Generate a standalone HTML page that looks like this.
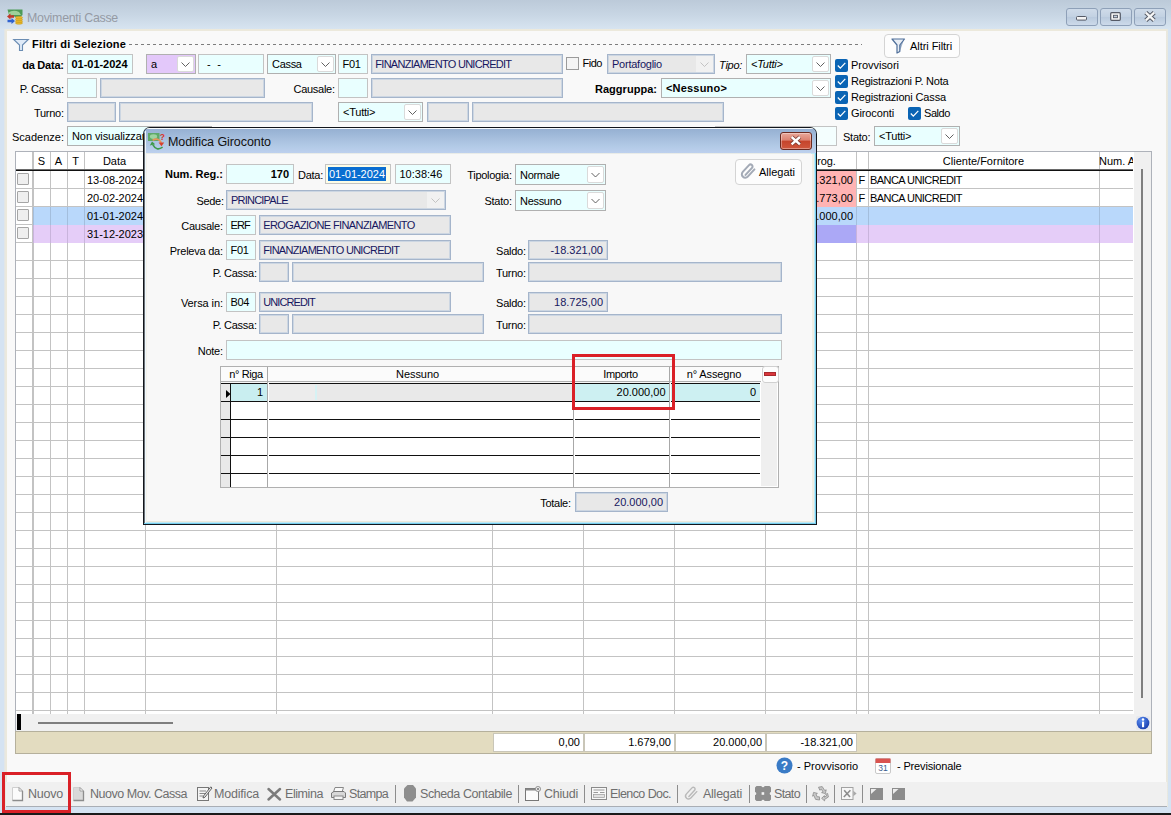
<!DOCTYPE html>
<html lang="it"><head><meta charset="utf-8"><title>Movimenti Casse</title>
<style>
html,body{margin:0;padding:0}
body{width:1171px;height:815px;position:relative;overflow:hidden;background:#c8d8ea;font-family:"Liberation Sans",sans-serif;font-size:11px;color:#000}
.a{position:absolute;box-sizing:content-box}
.t{white-space:nowrap;overflow:visible}
.f{box-sizing:border-box}
.ed{background:#e9ffff;border:1px solid #c3c3c3}
.cb{border-color:#b0b0b0}
.ro{background:#e8e8e8;border:1px solid #a5b5cb;box-shadow:inset 0 0 0 1px #ccd6e2}
.ddb{box-sizing:border-box;background:#fff;border:1px solid #dadada;border-radius:2px}
svg{display:block;overflow:visible}
</style></head><body>
<div class="a " style="left:0px;top:0px;width:1171px;height:815px;background:#d5e3f2"></div>
<div class="a " style="left:0px;top:0px;width:1171px;height:30px;background:linear-gradient(to bottom,#bccad9 0,#c8d6e4 50%,#d8e5f1 100%)"></div>
<div class="a " style="left:0px;top:813px;width:1171px;height:2px;background:#1a1a1a"></div>
<div class="a " style="left:4px;top:29px;width:1164px;height:778px;background:linear-gradient(to right,#dfe5ea 0,#ece9dc 2px,#ece9dc 1162px,#e6e8e2 1164px)"></div>
<div class="a " style="left:7px;top:31px;width:1159px;height:775px;background:#f9f9f9"></div>
<svg class="a" style="left:7px;top:9px" width="16" height="16" viewBox="0 0 16 16">
<path d="M0.5 0.5 H15.5 V6 L12 9 L2 6 Z" fill="#4d9a57"/><path d="M1 4 Q6 0 12 3 L14 6 L3 6Z" fill="#9ed19a"/>
<path d="M0 7.5 L3.5 4.5 V6.3 H7 V8.8 H3.5 V10.5 Z" fill="#c0392b"/>
<path d="M8 12 L4.5 15 V13.2 H0.5 V10.8 H4.5 V9 Z" fill="#2f62d0"/>
<g fill="#e9b92a" stroke="#b98a14" stroke-width="0.4"><ellipse cx="12" cy="14" rx="3.6" ry="1.3"/><ellipse cx="12" cy="12.2" rx="3.6" ry="1.3"/><ellipse cx="12" cy="10.4" rx="3.6" ry="1.3"/><ellipse cx="12" cy="8.6" rx="3.6" ry="1.3"/></g>
</svg>
<div class="a t" style="left:27px;top:9px;width:200px;height:18px;line-height:18px;font-size:12.4px;color:#959aa4;letter-spacing:-0.27px;">Movimenti Casse</div>
<div class="a " style="left:1066px;top:8px;width:30px;height:16px;border:1px solid #8ea0b8;border-radius:3px;background:linear-gradient(to bottom,#cfdbe9,#c2d1e2 50%,#b9cadd 51%,#cddaea)"></div>
<div class="a " style="left:1100px;top:8px;width:30px;height:16px;border:1px solid #8ea0b8;border-radius:3px;background:linear-gradient(to bottom,#cfdbe9,#c2d1e2 50%,#b9cadd 51%,#cddaea)"></div>
<div class="a " style="left:1134px;top:8px;width:30px;height:16px;border:1px solid #8ea0b8;border-radius:3px;background:linear-gradient(to bottom,#cfdbe9,#c2d1e2 50%,#b9cadd 51%,#cddaea)"></div>
<svg class="a" style="left:1066px;top:8px" width="32" height="18" viewBox="0 0 32 18"><rect x="10.5" y="8.5" width="10" height="3.6" rx="1" fill="#f4f4f4" stroke="#555a66" stroke-width="1"/></svg>
<svg class="a" style="left:1100px;top:8px" width="32" height="18" viewBox="0 0 32 18"><rect x="10.7" y="4.7" width="9.6" height="7.6" rx="1" fill="#f4f4f4" stroke="#555a66" stroke-width="1.2"/><rect x="13.5" y="7.3" width="4" height="2.4" fill="#c5d2e2" stroke="#555a66" stroke-width="0.9"/></svg>
<svg class="a" style="left:1134px;top:8px" width="32" height="18" viewBox="0 0 32 18"><path d="M11.8 4.6 L20.2 12.4 M20.2 4.6 L11.8 12.4" stroke="#555a66" stroke-width="4.2" fill="none"/><path d="M11.8 4.6 L20.2 12.4 M20.2 4.6 L11.8 12.4" stroke="#f6f6f6" stroke-width="2.3" fill="none"/></svg>
<svg class="a" style="left:13px;top:38px" width="16" height="14" viewBox="0 0 16 14"><path d="M0.7 1.5 H15.3 L9.5 7 V12.5 H6.5 V7 Z" fill="#dfeaf7" stroke="#6b8db3" stroke-width="1.1" stroke-linejoin="miter"/></svg>
<div class="a t" style="left:32px;top:36px;width:110px;height:16px;line-height:16px;font-size:11px;font-weight:bold;letter-spacing:0.19px;">Filtri di Selezione</div>
<div class="a " style="left:129px;top:44px;width:733px;height:1px;background:repeating-linear-gradient(to right,#7d7d7d 0,#7d7d7d 3px,transparent 3px,transparent 6px)"></div>
<div class="a " style="left:884px;top:34px;width:74px;height:22px;border:1px solid #d4d4d4;border-radius:4px;background:#fdfdfd"></div>
<svg class="a" style="left:891px;top:38px" width="15" height="16" viewBox="0 0 15 16"><path d="M1 1 H13.5 L8.8 7 V13.5 L6 15 V7 Z" fill="#e9eef5" stroke="#4f6f9a" stroke-width="1.2" stroke-linejoin="round"/><path d="M9 7 L13 1.5 L9 13z" fill="#4f6f9a" opacity=".55"/></svg>
<div class="a t" style="left:910px;top:35px;width:50px;height:23px;line-height:23px;font-size:11px;letter-spacing:-0.06px;">Altri Filtri</div>
<div class="a t" style="left:10px;top:55px;width:54px;height:20px;line-height:20px;font-size:11px;font-weight:bold;text-align:right;letter-spacing:-0.22px;margin-left:-0.22px;">da Data:</div>
<div class="a f ed" style="left:67px;top:54px;width:66px;height:20px;"></div>
<div class="a t" style="left:71.5px;top:54px;width:59.5px;height:20px;line-height:20px;font-size:11px;font-weight:bold;color:#000;letter-spacing:-0.03px;">01-01-2024</div>
<div class="a f ed cb" style="left:146px;top:54px;width:50px;height:20px;background:#e3c8fa;"></div>
<div class="a ddb" style="left:177px;top:56px;width:17px;height:16px;"></div>
<svg class="a" style="left:177px;top:56px" width="17" height="16" viewBox="0 0 17 16"><path d="M4.5 6.5 L8.5 10.5 L12.5 6.5" fill="none" stroke="#505050" stroke-width="0.9"/></svg>
<div class="a t" style="left:151px;top:54px;width:28px;height:20px;line-height:20px;font-size:11px;color:#000;letter-spacing:-0.31px;">a</div>
<div class="a f ed" style="left:198px;top:54px;width:66px;height:20px;"></div>
<div class="a t" style="left:207px;top:54px;width:55px;height:20px;line-height:20px;font-size:11px;color:#000;letter-spacing:1.71px;">- -</div>
<div class="a f ed cb" style="left:267px;top:54px;width:69px;height:20px;"></div>
<div class="a ddb" style="left:317px;top:56px;width:17px;height:16px;"></div>
<svg class="a" style="left:317px;top:56px" width="17" height="16" viewBox="0 0 17 16"><path d="M4.5 6.5 L8.5 10.5 L12.5 6.5" fill="none" stroke="#505050" stroke-width="0.9"/></svg>
<div class="a t" style="left:272px;top:54px;width:47px;height:20px;line-height:20px;font-size:11px;color:#000;letter-spacing:-0.31px;">Cassa</div>
<div class="a f ed" style="left:338px;top:54px;width:30px;height:20px;"></div>
<div class="a t" style="left:342.5px;top:54px;width:23.5px;height:20px;line-height:20px;font-size:11px;color:#000;letter-spacing:-0.32px;">F01</div>
<div class="a f ro" style="left:371px;top:54px;width:192px;height:20px;"></div>
<div class="a t" style="left:375.3px;top:54px;width:185.7px;height:20px;line-height:20px;font-size:11px;color:#17175f;letter-spacing:-0.72px;">FINANZIAMENTO UNICREDIT</div>
<div class="a " style="left:566px;top:57px;width:11px;height:11px;border:1px solid #9b9b9b;background:#f4f4f4"></div>
<div class="a t" style="left:582.5px;top:53px;width:30px;height:20px;line-height:20px;font-size:11px;letter-spacing:-0.47px;">Fido</div>
<div class="a f ro" style="left:607px;top:54px;width:108px;height:20px;"></div>
<div class="a " style="left:696px;top:56px;width:17px;height:16px;background:#f1f1f1"></div>
<svg class="a" style="left:696px;top:56px" width="17" height="16" viewBox="0 0 17 16"><path d="M4.5 6.5 L8.5 10.5 L12.5 6.5" fill="none" stroke="#bdbdbd" stroke-width="0.9"/></svg>
<div class="a t" style="left:612px;top:54px;width:86px;height:20px;line-height:20px;font-size:11px;color:#17175f;letter-spacing:-0.24px;">Portafoglio</div>
<div class="a t" style="left:719px;top:55px;width:30px;height:20px;line-height:20px;font-size:11px;font-style:italic;letter-spacing:-0.24px;">Tipo:</div>
<div class="a f ed cb" style="left:746px;top:54px;width:85px;height:20px;"></div>
<div class="a ddb" style="left:812px;top:56px;width:17px;height:16px;"></div>
<svg class="a" style="left:812px;top:56px" width="17" height="16" viewBox="0 0 17 16"><path d="M4.5 6.5 L8.5 10.5 L12.5 6.5" fill="none" stroke="#505050" stroke-width="0.9"/></svg>
<div class="a t" style="left:751px;top:54px;width:63px;height:20px;line-height:20px;font-size:11px;font-style:italic;color:#000;letter-spacing:-0.24px;">&lt;Tutti&gt;</div>
<div class="a t" style="left:10px;top:79px;width:54px;height:20px;line-height:20px;font-size:11px;text-align:right;letter-spacing:-0.26px;margin-left:-0.26px;">P. Cassa:</div>
<div class="a f ed" style="left:67px;top:78px;width:30px;height:20px;"></div>
<div class="a f ro" style="left:100px;top:78px;width:165px;height:20px;"></div>
<div class="a t" style="left:280px;top:79px;width:55px;height:20px;line-height:20px;font-size:11px;text-align:right;letter-spacing:-0.27px;margin-left:-0.27px;">Causale:</div>
<div class="a f ed" style="left:338px;top:78px;width:30px;height:20px;"></div>
<div class="a f ro" style="left:371px;top:78px;width:192px;height:20px;"></div>
<div class="a t" style="left:590px;top:79px;width:67px;height:20px;line-height:20px;font-size:11px;font-weight:bold;text-align:right;letter-spacing:0.03px;margin-left:0.03px;">Raggruppa:</div>
<div class="a f ed cb" style="left:661px;top:78px;width:170px;height:20px;"></div>
<div class="a ddb" style="left:812px;top:80px;width:17px;height:16px;"></div>
<svg class="a" style="left:812px;top:80px" width="17" height="16" viewBox="0 0 17 16"><path d="M4.5 6.5 L8.5 10.5 L12.5 6.5" fill="none" stroke="#505050" stroke-width="0.9"/></svg>
<div class="a t" style="left:666px;top:78px;width:148px;height:20px;line-height:20px;font-size:11px;font-weight:bold;color:#000;letter-spacing:0.19px;">&lt;Nessuno&gt;</div>
<div class="a t" style="left:10px;top:103px;width:54px;height:20px;line-height:20px;font-size:11px;text-align:right;letter-spacing:-0.26px;margin-left:-0.26px;">Turno:</div>
<div class="a f ro" style="left:67px;top:102px;width:49px;height:20px;"></div>
<div class="a f ro" style="left:119px;top:102px;width:194px;height:20px;"></div>
<div class="a f ed cb" style="left:338px;top:102px;width:85px;height:20px;"></div>
<div class="a ddb" style="left:404px;top:104px;width:17px;height:16px;"></div>
<svg class="a" style="left:404px;top:104px" width="17" height="16" viewBox="0 0 17 16"><path d="M4.5 6.5 L8.5 10.5 L12.5 6.5" fill="none" stroke="#505050" stroke-width="0.9"/></svg>
<div class="a t" style="left:343px;top:102px;width:63px;height:20px;line-height:20px;font-size:11px;color:#000;letter-spacing:-0.24px;">&lt;Tutti&gt;</div>
<div class="a f ro" style="left:427px;top:102px;width:42px;height:20px;"></div>
<div class="a f ro" style="left:472px;top:102px;width:252px;height:20px;"></div>
<div class="a t" style="left:5px;top:127px;width:59px;height:20px;line-height:20px;font-size:11px;text-align:right;">Scadenze:</div>
<div class="a f ed cb" style="left:67px;top:126px;width:145px;height:20px;"></div>
<div class="a ddb" style="left:193px;top:128px;width:17px;height:16px;"></div>
<svg class="a" style="left:193px;top:128px" width="17" height="16" viewBox="0 0 17 16"><path d="M4.5 6.5 L8.5 10.5 L12.5 6.5" fill="none" stroke="#505050" stroke-width="0.9"/></svg>
<div class="a t" style="left:72px;top:126px;width:123px;height:20px;line-height:20px;font-size:11px;color:#000;letter-spacing:-0.08px;">Non visualizzare</div>
<div class="a f ed" style="left:715px;top:126px;width:122px;height:20px;"></div>
<div class="a " style="left:716px;top:127px;width:120px;height:18px;background:#f4fefe"></div>
<div class="a t" style="left:843px;top:127px;width:30px;height:20px;line-height:20px;font-size:11px;letter-spacing:-0.24px;">Stato:</div>
<div class="a f ed cb" style="left:874px;top:126px;width:86px;height:20px;"></div>
<div class="a ddb" style="left:941px;top:128px;width:17px;height:16px;"></div>
<svg class="a" style="left:941px;top:128px" width="17" height="16" viewBox="0 0 17 16"><path d="M4.5 6.5 L8.5 10.5 L12.5 6.5" fill="none" stroke="#505050" stroke-width="0.9"/></svg>
<div class="a t" style="left:879px;top:126px;width:64px;height:20px;line-height:20px;font-size:11px;color:#000;letter-spacing:-0.24px;">&lt;Tutti&gt;</div>
<svg class="a" style="left:835px;top:59px" width="13" height="13" viewBox="0 0 13 13"><rect x="0" y="0" width="13" height="13" rx="2" fill="#0a64b4"/><path d="M2.8 6.5 L5.3 9.1 L10.3 3.9" fill="none" stroke="#fff" stroke-width="1.25"/></svg>
<div class="a t" style="left:851px;top:57px;width:140px;height:16px;line-height:16px;font-size:11px;letter-spacing:-0.03px;">Provvisori</div>
<svg class="a" style="left:835px;top:75px" width="13" height="13" viewBox="0 0 13 13"><rect x="0" y="0" width="13" height="13" rx="2" fill="#0a64b4"/><path d="M2.8 6.5 L5.3 9.1 L10.3 3.9" fill="none" stroke="#fff" stroke-width="1.25"/></svg>
<div class="a t" style="left:851px;top:73px;width:140px;height:16px;line-height:16px;font-size:11px;letter-spacing:-0.21px;">Registrazioni P. Nota</div>
<svg class="a" style="left:835px;top:91px" width="13" height="13" viewBox="0 0 13 13"><rect x="0" y="0" width="13" height="13" rx="2" fill="#0a64b4"/><path d="M2.8 6.5 L5.3 9.1 L10.3 3.9" fill="none" stroke="#fff" stroke-width="1.25"/></svg>
<div class="a t" style="left:851px;top:89px;width:140px;height:16px;line-height:16px;font-size:11px;letter-spacing:-0.15px;">Registrazioni Cassa</div>
<svg class="a" style="left:835px;top:107px" width="13" height="13" viewBox="0 0 13 13"><rect x="0" y="0" width="13" height="13" rx="2" fill="#0a64b4"/><path d="M2.8 6.5 L5.3 9.1 L10.3 3.9" fill="none" stroke="#fff" stroke-width="1.25"/></svg>
<div class="a t" style="left:851px;top:105px;width:140px;height:16px;line-height:16px;font-size:11px;letter-spacing:-0.11px;">Giroconti</div>
<svg class="a" style="left:908px;top:107px" width="13" height="13" viewBox="0 0 13 13"><rect x="0" y="0" width="13" height="13" rx="2" fill="#0a64b4"/><path d="M2.8 6.5 L5.3 9.1 L10.3 3.9" fill="none" stroke="#fff" stroke-width="1.25"/></svg>
<div class="a t" style="left:924px;top:105px;width:50px;height:16px;line-height:16px;font-size:11px;letter-spacing:-0.43px;">Saldo</div>
<div class="a " style="left:15px;top:151px;width:1137px;height:581px;background:#fff;border:1px solid #aeb2ba;box-sizing:border-box"></div>
<div class="a " style="left:16px;top:188px;width:1117px;height:1px;background:#c3c3c3"></div>
<div class="a " style="left:16px;top:206px;width:1117px;height:1px;background:#c3c3c3"></div>
<div class="a " style="left:16px;top:224px;width:1117px;height:1px;background:#c3c3c3"></div>
<div class="a " style="left:16px;top:242px;width:1117px;height:1px;background:#c3c3c3"></div>
<div class="a " style="left:16px;top:260px;width:1117px;height:1px;background:#c3c3c3"></div>
<div class="a " style="left:16px;top:278px;width:1117px;height:1px;background:#c3c3c3"></div>
<div class="a " style="left:16px;top:296px;width:1117px;height:1px;background:#c3c3c3"></div>
<div class="a " style="left:16px;top:314px;width:1117px;height:1px;background:#c3c3c3"></div>
<div class="a " style="left:16px;top:332px;width:1117px;height:1px;background:#c3c3c3"></div>
<div class="a " style="left:16px;top:350px;width:1117px;height:1px;background:#c3c3c3"></div>
<div class="a " style="left:16px;top:368px;width:1117px;height:1px;background:#c3c3c3"></div>
<div class="a " style="left:16px;top:386px;width:1117px;height:1px;background:#c3c3c3"></div>
<div class="a " style="left:16px;top:404px;width:1117px;height:1px;background:#c3c3c3"></div>
<div class="a " style="left:16px;top:422px;width:1117px;height:1px;background:#c3c3c3"></div>
<div class="a " style="left:16px;top:440px;width:1117px;height:1px;background:#c3c3c3"></div>
<div class="a " style="left:16px;top:458px;width:1117px;height:1px;background:#c3c3c3"></div>
<div class="a " style="left:16px;top:476px;width:1117px;height:1px;background:#c3c3c3"></div>
<div class="a " style="left:16px;top:494px;width:1117px;height:1px;background:#c3c3c3"></div>
<div class="a " style="left:16px;top:512px;width:1117px;height:1px;background:#c3c3c3"></div>
<div class="a " style="left:16px;top:530px;width:1117px;height:1px;background:#c3c3c3"></div>
<div class="a " style="left:16px;top:548px;width:1117px;height:1px;background:#c3c3c3"></div>
<div class="a " style="left:16px;top:566px;width:1117px;height:1px;background:#c3c3c3"></div>
<div class="a " style="left:16px;top:584px;width:1117px;height:1px;background:#c3c3c3"></div>
<div class="a " style="left:16px;top:602px;width:1117px;height:1px;background:#c3c3c3"></div>
<div class="a " style="left:16px;top:620px;width:1117px;height:1px;background:#c3c3c3"></div>
<div class="a " style="left:16px;top:638px;width:1117px;height:1px;background:#c3c3c3"></div>
<div class="a " style="left:16px;top:656px;width:1117px;height:1px;background:#c3c3c3"></div>
<div class="a " style="left:16px;top:674px;width:1117px;height:1px;background:#c3c3c3"></div>
<div class="a " style="left:16px;top:692px;width:1117px;height:1px;background:#c3c3c3"></div>
<div class="a " style="left:16px;top:710px;width:1117px;height:1px;background:#c3c3c3"></div>
<div class="a " style="left:33px;top:207px;width:1100px;height:18px;background:#b9d8fb"></div>
<div class="a " style="left:33px;top:225px;width:1100px;height:18px;background:#e5cdf8"></div>
<div class="a " style="left:765px;top:171px;width:91px;height:18px;background:#ffb3b3"></div>
<div class="a " style="left:765px;top:189px;width:91px;height:18px;background:#ffb3b3"></div>
<div class="a " style="left:765px;top:225px;width:91px;height:18px;background:#aba8f6"></div>
<div class="a " style="left:33px;top:152px;width:1px;height:55px;background:#c3c3c3"></div>
<div class="a " style="left:33px;top:243px;width:1px;height:471px;background:#c3c3c3"></div>
<div class="a " style="left:33px;top:207px;width:1px;height:18px;background:#a3bedd"></div>
<div class="a " style="left:33px;top:225px;width:1px;height:18px;background:#c9b4dc"></div>
<div class="a " style="left:50px;top:152px;width:1px;height:55px;background:#c3c3c3"></div>
<div class="a " style="left:50px;top:243px;width:1px;height:471px;background:#c3c3c3"></div>
<div class="a " style="left:50px;top:207px;width:1px;height:18px;background:#a3bedd"></div>
<div class="a " style="left:50px;top:225px;width:1px;height:18px;background:#c9b4dc"></div>
<div class="a " style="left:67px;top:152px;width:1px;height:55px;background:#c3c3c3"></div>
<div class="a " style="left:67px;top:243px;width:1px;height:471px;background:#c3c3c3"></div>
<div class="a " style="left:67px;top:207px;width:1px;height:18px;background:#a3bedd"></div>
<div class="a " style="left:67px;top:225px;width:1px;height:18px;background:#c9b4dc"></div>
<div class="a " style="left:84px;top:152px;width:1px;height:55px;background:#c3c3c3"></div>
<div class="a " style="left:84px;top:243px;width:1px;height:471px;background:#c3c3c3"></div>
<div class="a " style="left:84px;top:207px;width:1px;height:18px;background:#a3bedd"></div>
<div class="a " style="left:84px;top:225px;width:1px;height:18px;background:#c9b4dc"></div>
<div class="a " style="left:145px;top:152px;width:1px;height:55px;background:#c3c3c3"></div>
<div class="a " style="left:145px;top:243px;width:1px;height:471px;background:#c3c3c3"></div>
<div class="a " style="left:145px;top:207px;width:1px;height:18px;background:#a3bedd"></div>
<div class="a " style="left:145px;top:225px;width:1px;height:18px;background:#c9b4dc"></div>
<div class="a " style="left:276px;top:152px;width:1px;height:55px;background:#c3c3c3"></div>
<div class="a " style="left:276px;top:243px;width:1px;height:471px;background:#c3c3c3"></div>
<div class="a " style="left:276px;top:207px;width:1px;height:18px;background:#a3bedd"></div>
<div class="a " style="left:276px;top:225px;width:1px;height:18px;background:#c9b4dc"></div>
<div class="a " style="left:492px;top:152px;width:1px;height:55px;background:#c3c3c3"></div>
<div class="a " style="left:492px;top:243px;width:1px;height:471px;background:#c3c3c3"></div>
<div class="a " style="left:492px;top:207px;width:1px;height:18px;background:#a3bedd"></div>
<div class="a " style="left:492px;top:225px;width:1px;height:18px;background:#c9b4dc"></div>
<div class="a " style="left:583px;top:152px;width:1px;height:55px;background:#c3c3c3"></div>
<div class="a " style="left:583px;top:243px;width:1px;height:471px;background:#c3c3c3"></div>
<div class="a " style="left:583px;top:207px;width:1px;height:18px;background:#a3bedd"></div>
<div class="a " style="left:583px;top:225px;width:1px;height:18px;background:#c9b4dc"></div>
<div class="a " style="left:674px;top:152px;width:1px;height:55px;background:#c3c3c3"></div>
<div class="a " style="left:674px;top:243px;width:1px;height:471px;background:#c3c3c3"></div>
<div class="a " style="left:674px;top:207px;width:1px;height:18px;background:#a3bedd"></div>
<div class="a " style="left:674px;top:225px;width:1px;height:18px;background:#c9b4dc"></div>
<div class="a " style="left:765px;top:152px;width:1px;height:55px;background:#c3c3c3"></div>
<div class="a " style="left:765px;top:243px;width:1px;height:471px;background:#c3c3c3"></div>
<div class="a " style="left:765px;top:207px;width:1px;height:18px;background:#a3bedd"></div>
<div class="a " style="left:765px;top:225px;width:1px;height:18px;background:#c9b4dc"></div>
<div class="a " style="left:856px;top:152px;width:1px;height:55px;background:#c3c3c3"></div>
<div class="a " style="left:856px;top:243px;width:1px;height:471px;background:#c3c3c3"></div>
<div class="a " style="left:856px;top:207px;width:1px;height:18px;background:#a3bedd"></div>
<div class="a " style="left:856px;top:225px;width:1px;height:18px;background:#c9b4dc"></div>
<div class="a " style="left:868px;top:152px;width:1px;height:55px;background:#c3c3c3"></div>
<div class="a " style="left:868px;top:243px;width:1px;height:471px;background:#c3c3c3"></div>
<div class="a " style="left:868px;top:207px;width:1px;height:18px;background:#a3bedd"></div>
<div class="a " style="left:868px;top:225px;width:1px;height:18px;background:#c9b4dc"></div>
<div class="a " style="left:1099px;top:152px;width:1px;height:55px;background:#c3c3c3"></div>
<div class="a " style="left:1099px;top:243px;width:1px;height:471px;background:#c3c3c3"></div>
<div class="a " style="left:1099px;top:207px;width:1px;height:18px;background:#a3bedd"></div>
<div class="a " style="left:1099px;top:225px;width:1px;height:18px;background:#c9b4dc"></div>
<div class="a " style="left:32px;top:152px;width:1px;height:562px;background:#c3c3c3"></div>
<div class="a " style="left:16px;top:169px;width:1117px;height:1px;background:#6a6a6a"></div>
<div class="a " style="left:16px;top:170px;width:1117px;height:1px;background:#111"></div>
<div class="a t" style="left:33px;top:152px;width:17px;height:18px;line-height:18px;font-size:11px;text-align:center;">S</div>
<div class="a t" style="left:50px;top:152px;width:17px;height:18px;line-height:18px;font-size:11px;text-align:center;">A</div>
<div class="a t" style="left:67px;top:152px;width:17px;height:18px;line-height:18px;font-size:11px;text-align:center;">T</div>
<div class="a t" style="left:84px;top:152px;width:61px;height:18px;line-height:18px;font-size:11px;text-align:center;">Data</div>
<div class="a t" style="left:868px;top:152px;width:231px;height:18px;line-height:18px;font-size:11px;text-align:center;">Cliente/Fornitore</div>
<div class="a t" style="left:780px;top:152px;width:60px;height:18px;line-height:18px;font-size:11px;letter-spacing:-0.18px;">Saldo Prog.</div>
<div class="a t" style="left:1099px;top:152px;width:34px;height:18px;line-height:18px;font-size:11px;overflow:hidden;white-space:nowrap;">Num. A</div>
<div class="a " style="left:17px;top:173px;width:10px;height:10px;border:1px solid #a5a5a5;background:#efefef;border-radius:1px"></div>
<div class="a " style="left:17px;top:191px;width:10px;height:10px;border:1px solid #a5a5a5;background:#efefef;border-radius:1px"></div>
<div class="a " style="left:17px;top:209px;width:10px;height:10px;border:1px solid #a5a5a5;background:#efefef;border-radius:1px"></div>
<div class="a " style="left:17px;top:227px;width:10px;height:10px;border:1px solid #a5a5a5;background:#efefef;border-radius:1px"></div>
<div class="a t" style="left:87px;top:171px;width:58px;height:18px;line-height:18px;font-size:11px;letter-spacing:-0.03px;">13-08-2024</div>
<div class="a t" style="left:87px;top:189px;width:58px;height:18px;line-height:18px;font-size:11px;letter-spacing:-0.03px;">20-02-2024</div>
<div class="a t" style="left:87px;top:207px;width:58px;height:18px;line-height:18px;font-size:11px;letter-spacing:-0.03px;">01-01-2024</div>
<div class="a t" style="left:87px;top:225px;width:58px;height:18px;line-height:18px;font-size:11px;letter-spacing:-0.03px;">31-12-2023</div>
<div class="a t" style="left:765px;top:171px;width:88px;height:18px;line-height:18px;font-size:11px;text-align:right;">-18.321,00</div>
<div class="a t" style="left:765px;top:189px;width:88px;height:18px;line-height:18px;font-size:11px;text-align:right;">-16.773,00</div>
<div class="a t" style="left:765px;top:207px;width:88px;height:18px;line-height:18px;font-size:11px;text-align:right;">20.000,00</div>
<div class="a t" style="left:858.5px;top:171px;width:10px;height:18px;line-height:18px;font-size:11px;">F</div>
<div class="a t" style="left:870px;top:171px;width:200px;height:18px;line-height:18px;font-size:11px;letter-spacing:-0.55px;">BANCA UNICREDIT</div>
<div class="a t" style="left:858.5px;top:189px;width:10px;height:18px;line-height:18px;font-size:11px;">F</div>
<div class="a t" style="left:870px;top:189px;width:200px;height:18px;line-height:18px;font-size:11px;letter-spacing:-0.55px;">BANCA UNICREDIT</div>
<div class="a " style="left:1134px;top:152px;width:17px;height:579px;background:#f0f0f0"></div>
<div class="a " style="left:1141px;top:169px;width:2px;height:529px;background:#7e7e7e"></div>
<div class="a " style="left:16px;top:714px;width:1118px;height:17px;background:#f0f0f0"></div>
<div class="a " style="left:17px;top:714px;width:4px;height:16px;background:#000"></div>
<div class="a " style="left:38px;top:722px;width:135px;height:2px;background:#7e7e7e"></div>
<svg class="a" style="left:1136px;top:716px" width="14" height="14" viewBox="0 0 14 14"><defs><radialGradient id="ig" cx="35%" cy="30%" r="75%"><stop offset="0" stop-color="#5a8df0"/><stop offset="1" stop-color="#1a3fae"/></radialGradient></defs><rect x="0" y="0" width="14" height="14" rx="1.5" fill="#e6e8ee"/><circle cx="7" cy="7" r="6.3" fill="url(#ig)"/><circle cx="7" cy="3.6" r="1.25" fill="#fff"/><rect x="6" y="5.6" width="2.1" height="5.6" fill="#fff"/></svg>
<div class="a " style="left:15px;top:731px;width:1137px;height:23px;background:#e3dcc0;border:1px solid #b5b09c;box-sizing:border-box"></div>
<div class="a " style="left:493px;top:733px;width:91px;height:19px;background:#fff;border:1px solid #c9c6b8;box-sizing:border-box"></div>
<div class="a t" style="left:493px;top:733px;width:87px;height:19px;line-height:19px;font-size:11px;text-align:right;">0,00</div>
<div class="a " style="left:584px;top:733px;width:91px;height:19px;background:#fff;border:1px solid #c9c6b8;box-sizing:border-box"></div>
<div class="a t" style="left:584px;top:733px;width:87px;height:19px;line-height:19px;font-size:11px;text-align:right;">1.679,00</div>
<div class="a " style="left:675px;top:733px;width:91px;height:19px;background:#fff;border:1px solid #c9c6b8;box-sizing:border-box"></div>
<div class="a t" style="left:675px;top:733px;width:87px;height:19px;line-height:19px;font-size:11px;text-align:right;">20.000,00</div>
<div class="a " style="left:766px;top:733px;width:91px;height:19px;background:#fff;border:1px solid #c9c6b8;box-sizing:border-box"></div>
<div class="a t" style="left:766px;top:733px;width:87px;height:19px;line-height:19px;font-size:11px;text-align:right;">-18.321,00</div>
<svg class="a" style="left:776px;top:757px" width="17" height="17" viewBox="0 0 17 17"><circle cx="8.5" cy="8.5" r="8" fill="#3a7bc6"/><text x="8.5" y="12.6" font-size="12" font-weight="bold" text-anchor="middle" fill="#fff" font-family="Liberation Sans,sans-serif">?</text></svg>
<div class="a t" style="left:797px;top:758px;width:70px;height:16px;line-height:16px;font-size:11px;">- Provvisorio</div>
<svg class="a" style="left:875px;top:757px" width="16" height="17" viewBox="0 0 16 17"><rect x="0.5" y="1.5" width="15" height="15" rx="1.5" fill="#fff" stroke="#c9c9c9"/><rect x="0.5" y="1.5" width="15" height="4.5" fill="#d9534f"/><text x="8" y="14.3" font-size="8.5" text-anchor="middle" fill="#3b5b8c" font-family="Liberation Sans,sans-serif">31</text></svg>
<div class="a t" style="left:897px;top:758px;width:80px;height:16px;line-height:16px;font-size:11px;letter-spacing:-0.15px;">- Previsionale</div>
<div class="a " style="left:6px;top:782px;width:1161px;height:24px;background:#f0f0f0"></div>
<div class="a " style="left:6px;top:806px;width:1161px;height:1px;background:#a9aeb5"></div>
<svg class="a" style="left:12px;top:787px" width="11" height="14" viewBox="0 0 11 14"><path d="M0.5 0.5 H7 L10.5 4 V13.5 H0.5Z" fill="#fbfbfb" stroke="#cfcfcf"/><path d="M10.5 4 V13.5 H0.5" fill="none" stroke="#8c8c8c" stroke-width="1.3"/><path d="M7 0.5 V4 H10.5 Z" fill="#fff" stroke="#9a9a9a" stroke-width=".9"/></svg>
<div class="a t" style="left:28px;top:784px;width:45px;height:20px;line-height:20px;font-size:12.5px;color:#6e6e6e;letter-spacing:-0.23px;">Nuovo</div>
<svg class="a" style="left:73px;top:787px" width="11" height="14" viewBox="0 0 11 14"><path d="M0.5 0.5 H7 L10.5 4 V13.5 H0.5Z" fill="#d9d9d9" stroke="#cfcfcf"/><path d="M10.5 4 V13.5 H0.5" fill="none" stroke="#8c8c8c" stroke-width="1.3"/><path d="M7 0.5 V4 H10.5 Z" fill="#fff" stroke="#9a9a9a" stroke-width=".9"/></svg>
<div class="a t" style="left:90px;top:784px;width:107px;height:20px;line-height:20px;font-size:12.5px;color:#6e6e6e;letter-spacing:-0.48px;">Nuovo Mov. Cassa</div>
<svg class="a" style="left:197px;top:786px" width="15" height="15" viewBox="0 0 15 15"><rect x="0.5" y="1.5" width="11" height="13" fill="#f4f4f4" stroke="#777"/><path d="M2.5 5H9M2.5 7.5H8M2.5 10H6" stroke="#888"/><path d="M13.8 0.8 L6.5 10 L6 12 L8 11.2 L15 2Z" fill="#e8e8e8" stroke="#555" stroke-width=".9"/></svg>
<div class="a t" style="left:214px;top:784px;width:55px;height:20px;line-height:20px;font-size:12.5px;color:#6e6e6e;letter-spacing:-0.19px;">Modifica</div>
<svg class="a" style="left:267px;top:786px" width="15" height="15" viewBox="0 0 15 15"><path d="M1.5 3 L13 13.5 M13 3 L1.5 13.5" stroke="#7c7c7c" stroke-width="2.5" stroke-linecap="round"/></svg>
<div class="a t" style="left:285px;top:784px;width:48px;height:20px;line-height:20px;font-size:12.5px;color:#6e6e6e;letter-spacing:-0.43px;">Elimina</div>
<svg class="a" style="left:331px;top:786px" width="15" height="15" viewBox="0 0 15 15"><path d="M4 1.5 H12.5 L11 6 H2.5Z" fill="#fafafa" stroke="#888"/><path d="M0.5 7 L3 5.5 H13 L14.5 7 V11.5 H0.5Z" fill="#d8d8d8" stroke="#7a7a7a"/><rect x="3" y="10" width="9" height="3.5" fill="#f4f4f4" stroke="#888"/></svg>
<div class="a t" style="left:349px;top:784px;width:49px;height:20px;line-height:20px;font-size:12.5px;color:#6e6e6e;letter-spacing:-0.68px;">Stampa</div>
<div class="a " style="left:395px;top:785px;width:1px;height:18px;background:#8d8d8d"></div>
<svg class="a" style="left:404px;top:785px" width="12" height="17" viewBox="0 0 12 17"><path d="M3.5 0 H9 L12 3.5 V12.5 L8.5 16.5 H3 L0 12.5 V3.5Z" fill="#8e8e8e"/></svg>
<div class="a t" style="left:420px;top:784px;width:102px;height:20px;line-height:20px;font-size:12.5px;color:#6e6e6e;letter-spacing:-0.42px;">Scheda Contabile</div>
<div class="a " style="left:518px;top:785px;width:1px;height:18px;background:#8d8d8d"></div>
<svg class="a" style="left:525px;top:786px" width="16" height="15" viewBox="0 0 16 15"><rect x="0.5" y="2.5" width="13" height="12" fill="#fbfbfb" stroke="#777"/><rect x="0.5" y="2.5" width="13" height="2" fill="#888"/><circle cx="13" cy="3" r="2.6" fill="#e9e9e9" stroke="#888" stroke-width=".8"/><path d="M11.8 1.8 L14.2 4.2 M14.2 1.8 L11.8 4.2" stroke="#777" stroke-width=".8"/></svg>
<div class="a t" style="left:544px;top:784px;width:44px;height:20px;line-height:20px;font-size:12.5px;color:#6e6e6e;letter-spacing:-0.24px;">Chiudi</div>
<div class="a " style="left:584px;top:785px;width:1px;height:18px;background:#8d8d8d"></div>
<svg class="a" style="left:591px;top:787px" width="16" height="13" viewBox="0 0 16 13"><rect x="0.5" y="0.5" width="15" height="12" fill="#f8f8f8" stroke="#8a8a8a"/><path d="M2.5 3H13.5M2.5 5.5H7M9 5.5H13.5" stroke="#9a9a9a"/><rect x="2.5" y="7.5" width="11" height="3" fill="#e1e1e1" stroke="#9a9a9a" stroke-width=".7"/></svg>
<div class="a t" style="left:610px;top:784px;width:71px;height:20px;line-height:20px;font-size:12.5px;color:#6e6e6e;letter-spacing:-0.58px;">Elenco Doc.</div>
<div class="a " style="left:677px;top:785px;width:1px;height:18px;background:#8d8d8d"></div>
<svg class="a" style="left:684px;top:786px" width="15" height="15" viewBox="0 0 16 16"><path d="M5.2 11.2 L11.3 4.6 A1.9 1.9 0 0 0 8.5 2 L2.6 8.4 A3.2 3.2 0 0 0 7.3 12.8 L13.6 6" fill="none" stroke="#b9b9b9" stroke-width="1.5" stroke-linecap="round"/></svg>
<div class="a t" style="left:703px;top:784px;width:49px;height:20px;line-height:20px;font-size:12.5px;color:#6e6e6e;letter-spacing:-0.25px;">Allegati</div>
<div class="a " style="left:749px;top:785px;width:1px;height:18px;background:#8d8d8d"></div>
<svg class="a" style="left:755px;top:786px" width="16" height="15" viewBox="0 0 16 15"><path d="M1.5 0 H6.5 A1.5 1.3 0 0 0 9.5 0 H14.5 L16 1.5 V6 A1.3 1.5 0 0 0 16 9 V13.5 L14.5 15 H9.5 A1.5 1.3 0 0 0 6.5 15 H1.5 L0 13.5 V9 A1.3 1.5 0 0 0 0 6 V1.5Z" fill="#8e8e8e"/><rect x="6.6" y="6.2" width="2.6" height="2.6" fill="#f4f4f4"/></svg>
<div class="a t" style="left:774px;top:784px;width:36px;height:20px;line-height:20px;font-size:12.5px;color:#6e6e6e;letter-spacing:-0.64px;">Stato</div>
<div class="a " style="left:806px;top:785px;width:1px;height:18px;background:#8d8d8d"></div>
<svg class="a" style="left:813px;top:786px" width="16" height="15" viewBox="0 0 16 15"><g fill="#c9c9c9" stroke="#8a8a8a" stroke-width=".8" stroke-linejoin="round"><path d="M5.5 1.2 L9.2 0.6 L11.8 4.6 L13.2 3.8 L12.4 7.6 L8.6 6.6 L10 5.8 L8.4 3.2 L6.8 4.2Z"/><path d="M14.6 7.4 L15.4 11 L11.6 13.4 L11.6 14.9 L8.6 12.3 L11.4 9.6 L11.5 11.2 L13.6 9.8 L12.6 8.4Z"/><path d="M6.6 14 L2.6 13.4 L0.8 9.4 L-0.4 10.2 L0.6 6.4 L4.4 7.4 L3 8.2 L4.2 10.8 L6.4 10.8Z"/></g></svg>
<div class="a " style="left:834px;top:785px;width:1px;height:18px;background:#8d8d8d"></div>
<svg class="a" style="left:841px;top:786px" width="16" height="15" viewBox="0 0 16 15"><rect x="0.5" y="1.5" width="11.5" height="12" fill="#f7f7f7" stroke="#a2a2a2"/><path d="M3.2 4.2 L9 11 M9.4 4.2 L2.8 11" stroke="#8d8d8d" stroke-width="1.6"/><path d="M12.3 4.8 L15.6 7.5 L12.3 10.2Z" fill="#a8a8a8"/></svg>
<div class="a " style="left:862px;top:785px;width:1px;height:18px;background:#8d8d8d"></div>
<svg class="a" style="left:870px;top:788px" width="13" height="12" viewBox="0 0 13 12"><rect width="13" height="12" fill="#8c8c8c"/><path d="M1 1 H6.5 L1 6Z" fill="#ededed"/></svg>
<svg class="a" style="left:892px;top:788px" width="13" height="12" viewBox="0 0 13 12"><rect width="13" height="12" fill="#8c8c8c"/><path d="M1 1 H6.5 L1 6Z" fill="#ededed"/></svg>
<div class="a " style="left:2px;top:772px;width:63px;height:35px;border:3px solid #da2027"></div>
<div class="a " style="left:143px;top:127px;width:674px;height:398px;background:#12161c;border-radius:7px 7px 0 0"></div>
<div class="a " style="left:144px;top:128px;width:672px;height:396px;background:linear-gradient(to bottom,#f6fafd 0,#f6fafd 1px,#97b0d2 1px,#9cb6d7 5px,#a9c1df 12px,#b2cae6 18px,#bdd0ee 25px,#bfe9f7 25px,#bfe9f7 100%);border-radius:5px 5px 0 0"></div>
<div class="a " style="left:146px;top:153px;width:665px;height:1px;background:#e9ece8"></div>
<div class="a " style="left:146px;top:154px;width:665px;height:367px;background:#f8f8f8;border-right:2px solid #f0eee3;border-bottom:1px solid #ece9da;border-left:1px solid #f3f1ea"></div>
<div class="a " style="left:144px;top:133px;width:1px;height:391px;background:#6d7278"></div>
<div class="a " style="left:145px;top:131px;width:1px;height:392px;background:#eef7fc"></div>
<div class="a " style="left:815px;top:153px;width:1px;height:371px;background:#74cdeb"></div>
<div class="a " style="left:144px;top:523px;width:672px;height:1px;background:#74cdeb"></div>
<svg class="a" style="left:148px;top:132px" width="17" height="18" viewBox="0 0 17 18"><rect x="0" y="1" width="11.5" height="8" fill="#5fa968"/><ellipse cx="5.5" cy="4.6" rx="3.6" ry="2.4" fill="#9ed3a0"/>
<path d="M4.6 8.2 Q10 5 13.4 10.8" fill="none" stroke="#e8935a" stroke-width="1.7"/><path d="M10.6 10.6 L16.2 10.6 L13.5 14.2Z" fill="#d8402c"/>
<path d="M14.6 15.2 Q8.5 19.5 4.8 12.6" fill="none" stroke="#3f9a4a" stroke-width="1.6"/><path d="M1.8 13.4 L7.2 12.2 L4 9.4Z" fill="#3f9a4a"/>
<text x="14.3" y="8.3" font-size="8.5" font-weight="bold" fill="#d9342b" text-anchor="middle" font-family="Liberation Sans,sans-serif">?</text></svg>
<div class="a t" style="left:168px;top:132px;width:200px;height:20px;line-height:20px;font-size:12.5px;color:#111;letter-spacing:-0.07px;">Modifica Giroconto</div>
<div class="a " style="left:780px;top:132px;width:30px;height:16px;border:1px solid #6b2a20;border-radius:3px;background:linear-gradient(to bottom,#e9a89a 0,#dc8170 45%,#c5442b 50%,#d0573d 100%);box-shadow:inset 0 0 0 1px rgba(255,255,255,.35)"></div>
<svg class="a" style="left:780px;top:132px" width="32" height="18" viewBox="0 0 32 18"><path d="M11.6 5 L19.9 12.3 M19.9 5 L11.6 12.3" stroke="#7a3a30" stroke-width="4" fill="none"/><path d="M11.6 5 L19.9 12.3 M19.9 5 L11.6 12.3" stroke="#fff" stroke-width="2.4" fill="none"/></svg>
<div class="a " style="left:735px;top:159px;width:65px;height:24px;border:1px solid #d4d4d4;border-radius:4px;background:#fdfdfd"></div>
<svg class="a" style="left:740px;top:163px" width="17" height="17" viewBox="0 0 16 16"><path d="M5.2 11.2 L11.3 4.6 A1.9 1.9 0 0 0 8.5 2 L2.6 8.4 A3.2 3.2 0 0 0 7.3 12.8 L13.6 6" fill="none" stroke="#a3aab6" stroke-width="1.9" stroke-linecap="round"/></svg>
<div class="a t" style="left:759px;top:160px;width:45px;height:24px;line-height:24px;font-size:11px;letter-spacing:-0.01px;">Allegati</div>
<div class="a t" style="left:150px;top:164px;width:73px;height:20px;line-height:20px;font-size:11px;font-weight:bold;text-align:right;">Num. Reg.:</div>
<div class="a f ed" style="left:226px;top:164px;width:68px;height:20px;"></div>
<div class="a t" style="left:228px;top:164px;width:61px;height:20px;line-height:20px;font-size:11px;font-weight:bold;color:#000;text-align:right;">170</div>
<div class="a t" style="left:298px;top:165px;width:26px;height:20px;line-height:20px;font-size:11px;letter-spacing:-0.26px;">Data:</div>
<div class="a f ed" style="left:325px;top:164px;width:66px;height:20px;"></div>
<div class="a " style="left:326px;top:165px;width:64px;height:18px;background:#fdfde6"></div>
<div class="a " style="left:328px;top:167px;width:58px;height:14px;background:#0a6ed1"></div>
<div class="a t" style="left:329px;top:164px;width:60px;height:20px;line-height:20px;font-size:11px;color:#fff;letter-spacing:-0.03px;">01-01-2024</div>
<div class="a f ed" style="left:395px;top:164px;width:56px;height:20px;"></div>
<div class="a t" style="left:399.5px;top:164px;width:49.5px;height:20px;line-height:20px;font-size:11px;color:#000;">10:38:46</div>
<div class="a t" style="left:440px;top:165px;width:72px;height:20px;line-height:20px;font-size:11px;text-align:right;letter-spacing:-0.28px;margin-left:-0.28px;">Tipologia:</div>
<div class="a f ed cb" style="left:515px;top:164px;width:91px;height:21px;"></div>
<div class="a ddb" style="left:587px;top:166px;width:17px;height:17px;"></div>
<svg class="a" style="left:587px;top:166px" width="17" height="17" viewBox="0 0 17 17"><path d="M4.5 7.0 L8.5 11.0 L12.5 7.0" fill="none" stroke="#505050" stroke-width="0.9"/></svg>
<div class="a t" style="left:520px;top:165px;width:69px;height:21px;line-height:21px;font-size:11px;color:#000;letter-spacing:-0.30px;">Normale</div>
<div class="a t" style="left:180px;top:191px;width:44px;height:20px;line-height:20px;font-size:11px;text-align:right;letter-spacing:-0.29px;margin-left:-0.29px;">Sede:</div>
<div class="a f ro" style="left:226px;top:190px;width:220px;height:20px;"></div>
<div class="a " style="left:427px;top:192px;width:17px;height:16px;background:#f1f1f1"></div>
<svg class="a" style="left:427px;top:192px" width="17" height="16" viewBox="0 0 17 16"><path d="M4.5 6.5 L8.5 10.5 L12.5 6.5" fill="none" stroke="#bdbdbd" stroke-width="0.9"/></svg>
<div class="a t" style="left:231px;top:190px;width:198px;height:20px;line-height:20px;font-size:11px;color:#17175f;letter-spacing:-0.78px;">PRINCIPALE</div>
<div class="a t" style="left:440px;top:191px;width:72px;height:20px;line-height:20px;font-size:11px;text-align:right;letter-spacing:-0.24px;margin-left:-0.24px;">Stato:</div>
<div class="a f ed cb" style="left:515px;top:190px;width:91px;height:21px;"></div>
<div class="a ddb" style="left:587px;top:192px;width:17px;height:17px;"></div>
<svg class="a" style="left:587px;top:192px" width="17" height="17" viewBox="0 0 17 17"><path d="M4.5 7.0 L8.5 11.0 L12.5 7.0" fill="none" stroke="#505050" stroke-width="0.9"/></svg>
<div class="a t" style="left:520px;top:191px;width:69px;height:21px;line-height:21px;font-size:11px;color:#000;letter-spacing:-0.31px;">Nessuno</div>
<div class="a t" style="left:160px;top:216px;width:63px;height:20px;line-height:20px;font-size:11px;text-align:right;letter-spacing:-0.24px;margin-left:-0.24px;">Causale:</div>
<div class="a f ed" style="left:226px;top:215px;width:30px;height:20px;"></div>
<div class="a t" style="left:230.5px;top:215px;width:23.5px;height:20px;line-height:20px;font-size:11px;color:#000;letter-spacing:-0.88px;">ERF</div>
<div class="a f ro" style="left:259px;top:215px;width:192px;height:20px;"></div>
<div class="a t" style="left:263.3px;top:215px;width:185.7px;height:20px;line-height:20px;font-size:11px;color:#17175f;letter-spacing:-0.61px;">EROGAZIONE FINANZIAMENTO</div>
<div class="a t" style="left:150px;top:241px;width:73px;height:20px;line-height:20px;font-size:11px;text-align:right;letter-spacing:-0.24px;margin-left:-0.24px;">Preleva da:</div>
<div class="a f ed" style="left:226px;top:240px;width:30px;height:20px;"></div>
<div class="a t" style="left:230.5px;top:240px;width:23.5px;height:20px;line-height:20px;font-size:11px;color:#000;letter-spacing:-0.32px;">F01</div>
<div class="a f ro" style="left:259px;top:240px;width:192px;height:20px;"></div>
<div class="a t" style="left:263.3px;top:240px;width:185.7px;height:20px;line-height:20px;font-size:11px;color:#17175f;letter-spacing:-0.72px;">FINANZIAMENTO UNICREDIT</div>
<div class="a t" style="left:480px;top:241px;width:46px;height:20px;line-height:20px;font-size:11px;text-align:right;letter-spacing:-0.26px;margin-left:-0.26px;">Saldo:</div>
<div class="a f ro" style="left:528px;top:240px;width:80px;height:20px;"></div>
<div class="a t" style="left:530px;top:240px;width:73px;height:20px;line-height:20px;font-size:11px;color:#17175f;text-align:right;">-18.321,00</div>
<div class="a t" style="left:190px;top:263px;width:67px;height:20px;line-height:20px;font-size:11px;text-align:right;letter-spacing:-0.26px;margin-left:-0.26px;">P. Cassa:</div>
<div class="a f ro" style="left:259px;top:262px;width:30px;height:20px;"></div>
<div class="a f ro" style="left:292px;top:262px;width:192px;height:20px;"></div>
<div class="a t" style="left:480px;top:263px;width:46px;height:20px;line-height:20px;font-size:11px;text-align:right;letter-spacing:-0.26px;margin-left:-0.26px;">Turno:</div>
<div class="a f ro" style="left:528px;top:262px;width:254px;height:20px;"></div>
<div class="a t" style="left:150px;top:293px;width:73px;height:20px;line-height:20px;font-size:11px;text-align:right;letter-spacing:-0.09px;margin-left:-0.09px;">Versa in:</div>
<div class="a f ed" style="left:226px;top:292px;width:30px;height:20px;"></div>
<div class="a t" style="left:230.5px;top:292px;width:23.5px;height:20px;line-height:20px;font-size:11px;color:#000;letter-spacing:-0.33px;">B04</div>
<div class="a f ro" style="left:259px;top:292px;width:192px;height:20px;"></div>
<div class="a t" style="left:263.3px;top:292px;width:185.7px;height:20px;line-height:20px;font-size:11px;color:#17175f;letter-spacing:-0.93px;">UNICREDIT</div>
<div class="a t" style="left:480px;top:293px;width:46px;height:20px;line-height:20px;font-size:11px;text-align:right;letter-spacing:-0.26px;margin-left:-0.26px;">Saldo:</div>
<div class="a f ro" style="left:528px;top:292px;width:80px;height:20px;"></div>
<div class="a t" style="left:530px;top:292px;width:73px;height:20px;line-height:20px;font-size:11px;color:#17175f;text-align:right;">18.725,00</div>
<div class="a t" style="left:190px;top:315px;width:67px;height:20px;line-height:20px;font-size:11px;text-align:right;letter-spacing:-0.26px;margin-left:-0.26px;">P. Cassa:</div>
<div class="a f ro" style="left:259px;top:314px;width:30px;height:20px;"></div>
<div class="a f ro" style="left:292px;top:314px;width:192px;height:20px;"></div>
<div class="a t" style="left:480px;top:315px;width:46px;height:20px;line-height:20px;font-size:11px;text-align:right;letter-spacing:-0.26px;margin-left:-0.26px;">Turno:</div>
<div class="a f ro" style="left:528px;top:314px;width:254px;height:20px;"></div>
<div class="a t" style="left:180px;top:341px;width:43px;height:20px;line-height:20px;font-size:11px;text-align:right;letter-spacing:-0.26px;margin-left:-0.26px;">Note:</div>
<div class="a f ed" style="left:226px;top:340px;width:556px;height:20px;"></div>
<div class="a " style="left:220px;top:366px;width:559px;height:122px;background:#fff;border:1px solid #b0b0b0;box-sizing:border-box"></div>
<div class="a " style="left:221px;top:367px;width:540px;height:15px;background:#fbfbfb"></div>
<div class="a " style="left:761px;top:383px;width:16px;height:103px;background:#efefef"></div>
<div class="a " style="left:221px;top:384px;width:9px;height:103px;background:#e9e9e9"></div>
<div class="a " style="left:231px;top:384px;width:36px;height:17px;background:#c9eef0"></div>
<div class="a " style="left:268px;top:384px;width:305px;height:17px;background:#e9e9e9"></div>
<div class="a " style="left:269px;top:385px;width:46px;height:15px;background:#ececec"></div>
<div class="a " style="left:315px;top:385px;width:2px;height:15px;background:#d6f2f4"></div>
<div class="a " style="left:573px;top:384px;width:187px;height:17px;background:#cdf0f2"></div>
<div class="a " style="left:221px;top:383px;width:539px;height:1px;background:#111"></div>
<div class="a " style="left:221px;top:401px;width:539px;height:1px;background:#111"></div>
<div class="a " style="left:221px;top:419px;width:539px;height:1px;background:#111"></div>
<div class="a " style="left:221px;top:437px;width:539px;height:1px;background:#111"></div>
<div class="a " style="left:221px;top:455px;width:539px;height:1px;background:#111"></div>
<div class="a " style="left:221px;top:473px;width:539px;height:1px;background:#111"></div>
<div class="a " style="left:221px;top:381px;width:540px;height:1px;background:#b0b0b0"></div>
<div class="a " style="left:221px;top:382px;width:557px;height:1px;background:#f6f6f6"></div>
<div class="a " style="left:230px;top:383px;width:1px;height:104px;background:#111"></div>
<div class="a " style="left:267px;top:383px;width:2px;height:104px;background:#fff"></div>
<div class="a " style="left:267px;top:367px;width:1px;height:120px;background:#a8a8a8"></div>
<div class="a " style="left:573px;top:383px;width:2px;height:104px;background:#fff"></div>
<div class="a " style="left:573px;top:367px;width:1px;height:120px;background:#a8a8a8"></div>
<div class="a " style="left:669px;top:383px;width:2px;height:104px;background:#fff"></div>
<div class="a " style="left:669px;top:367px;width:1px;height:120px;background:#a8a8a8"></div>
<div class="a t" style="left:223px;top:367px;width:46px;height:15px;line-height:15px;font-size:11px;text-align:center;letter-spacing:-0.39px;">n° Riga</div>
<div class="a t" style="left:263px;top:367px;width:309px;height:15px;line-height:15px;font-size:11px;text-align:center;letter-spacing:-0.06px;">Nessuno</div>
<div class="a t" style="left:573px;top:367px;width:95px;height:15px;line-height:15px;font-size:11px;text-align:center;letter-spacing:-0.40px;">Importo</div>
<div class="a t" style="left:669px;top:367px;width:90px;height:15px;line-height:15px;font-size:11px;text-align:center;letter-spacing:-0.13px;">n° Assegno</div>
<svg class="a" style="left:224px;top:389px" width="7" height="10" viewBox="0 0 7 10"><path d="M2 1 L6.5 5 L2 9Z" fill="#000"/></svg>
<div class="a t" style="left:231px;top:384px;width:32px;height:17px;line-height:17px;font-size:11px;text-align:right;">1</div>
<div class="a t" style="left:574px;top:384px;width:91.5px;height:17px;line-height:17px;font-size:11px;text-align:right;">20.000,00</div>
<div class="a t" style="left:671px;top:384px;width:85px;height:17px;line-height:17px;font-size:11px;text-align:right;">0</div>
<div class="a " style="left:762px;top:366px;width:15px;height:15px;border:1px solid #d0d0d0;border-radius:3px;background:#fdfdfd"></div>
<div class="a " style="left:764px;top:372px;width:12px;height:4px;background:#d9363c;border:1px solid #a82a2e;box-sizing:border-box"></div>
<div class="a t" style="left:530px;top:493px;width:41px;height:20px;line-height:20px;font-size:11px;text-align:right;letter-spacing:-0.27px;margin-left:-0.27px;">Totale:</div>
<div class="a f ro" style="left:575px;top:492px;width:93px;height:20px;"></div>
<div class="a t" style="left:577px;top:492px;width:86px;height:20px;line-height:20px;font-size:11px;color:#17175f;text-align:right;">20.000,00</div>
<div class="a " style="left:572px;top:354px;width:97px;height:50px;border:3px solid #da2027"></div>
</body></html>
